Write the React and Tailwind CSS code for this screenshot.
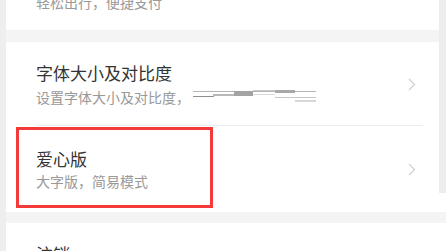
import React from 'react';

const font = { fontFamily: '"Noto Sans CJK SC", "Noto Sans", sans-serif' };

function Chevron() {
  return (
    <svg width="8" height="13" viewBox="0 0 8 13" className="shrink-0">
      <path d="M1 1l5.5 5.5L1 12" fill="none" stroke="#cfcfcf" strokeWidth="1.2" />
    </svg>
  );
}

function Glitch() {
  return (
    <svg width="126" height="16" viewBox="0 0 126 16" className="ml-[1px] mt-[1px]">
      <rect x="2" y="2" width="123" height="1" fill="#b5b5b5" />
      <rect x="43" y="2" width="19" height="5" fill="#a3a3a3" />
      <rect x="84" y="1" width="20" height="3" fill="#a8a8a8" />
      <rect x="62" y="1" width="22" height="1" fill="#c8c8c8" />
      <rect x="2" y="7" width="21" height="1" fill="#8f8f8f" />
      <rect x="22" y="5" width="21" height="2" fill="#b8b8b8" />
      <rect x="84" y="8" width="41" height="1" fill="#c6c6c6" />
      <rect x="104" y="11" width="21" height="2" fill="#d6d6d6" />
      <rect x="62" y="5" width="22" height="1" fill="#dadada" />
    </svg>
  );
}

function Row({ title, sub, extra, divider, gap, h }) {
  return (
    <div className="relative shrink-0 flex items-center pl-[30px] pr-[30px]" style={{ height: h }}>
      <div className="flex-1 flex flex-col">
        <div className="text-[17px] leading-[22px] text-[#333]">{title}</div>
        <div className="flex items-start text-[14px] leading-[18px] text-[#999]" style={{ marginTop: gap }}>
          <span>{sub}</span>
          {extra}
        </div>
      </div>
      <Chevron />
      {divider && <div className="absolute left-[30px] right-[23px] bottom-0 h-px bg-[#ececec]" />}
    </div>
  );
}

export default function App() {
  return (
    <div className="relative w-[446px] h-[251px] overflow-hidden bg-[#eeeeee] flex" style={font}>
      <div className="w-[6px] shrink-0" />
      <div className="flex-1 flex flex-col">
        <div className="bg-white h-[30px] shrink-0 pl-[30px] overflow-hidden">
          <div className="mt-[-7px] text-[14px] leading-[18px] text-[#999]">轻松出行，便捷支付</div>
        </div>
        <div className="h-[12px] shrink-0 bg-[#f4f4f4]" />
        <div className="bg-white shrink-0 flex flex-col">
          <Row h={84} gap={4} title="字体大小及对比度" sub="设置字体大小及对比度，" extra={<Glitch />} divider />
          <Row h={86} gap={2} title="爱心版" sub="大字版，简易模式" />
        </div>
        <div className="h-[11px] shrink-0 bg-[#f4f4f4]" />
        <div className="bg-white shrink-0 h-[60px] pl-[30px] pt-[20px]">
          <div className="text-[17px] leading-[22px] text-[#333]">注销</div>
        </div>
      </div>
      <div className="absolute right-0 top-0 w-[7px] h-[193px] bg-[#ededed]" />
      <div className="absolute left-[16px] top-[127px] w-[197px] h-[81px] border-[3px] border-[#f53a3a]" />
    </div>
  );
}
